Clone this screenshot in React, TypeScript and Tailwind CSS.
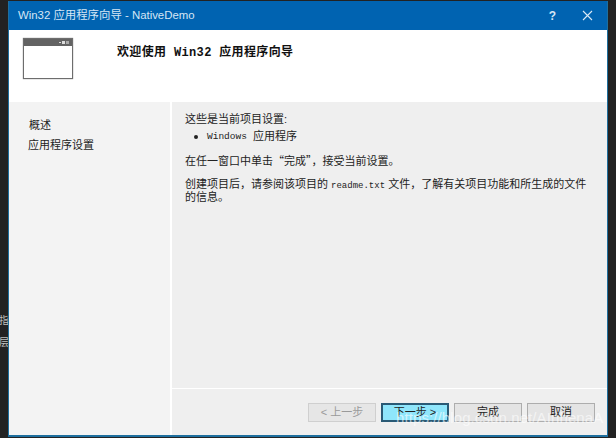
const cjk = "font-['Liberation_Sans','Noto_Sans_CJK_SC',sans-serif]";
const mono = "font-['Liberation_Mono','Noto_Sans_CJK_SC',monospace]";
const fullWidth = "font-['Noto_Sans_CJK_SC',sans-serif]";

function WizardButton({
  label,
  variant = "normal",
}: {
  label: string;
  variant?: "normal" | "primary" | "disabled";
}) {
  const styles = {
    normal: "border-[#adadad] bg-[#e4e4e4] text-[#222]",
    primary: "border-2 border-[#2a5a75] bg-[#8fe6fb] text-[#222]",
    disabled: "border-[#cfcfcf] bg-[#e6e6e6] text-[#9a9a9a]",
  };
  return (
    <div
      className={`flex h-[19px] w-[68px] items-center justify-center border text-[11px] ${styles[variant]}`}
    >
      {label}
    </div>
  );
}

export default function App() {
  return (
    <div className={`relative flex h-[438px] w-[616px] overflow-hidden bg-[#222222] ${cjk}`}>
      <div className="flex w-[8px] shrink-0 flex-col items-center pt-[310px] text-[10px] leading-[22px] text-[#c0c0c0]">
        <span>指</span>
        <span>层</span>
      </div>

      <div className="mt-px flex h-[436px] w-[600px] flex-col border-x border-b-2 border-[#1e6f9e] bg-white">
        <div className="flex h-[29px] shrink-0 items-center justify-between bg-[#0063b1] pl-[9px] pr-[14px] text-[11.4px] text-[#d5e6f5]">
          <span>Win32 应用程序向导 - NativeDemo</span>
          <div className="flex items-center gap-[26px]">
            <span className="text-[12px] font-bold">?</span>
            <svg width="11" height="11" viewBox="0 0 11 11" fill="none" stroke="#dbe9f5" strokeWidth="1.1">
              <path d="M1 1l9 9M10 1l-9 9" />
            </svg>
          </div>
        </div>

        <div className="flex h-[72px] shrink-0 bg-white">
          <div className="ml-[14px] mt-[8px] h-[41px] w-[50px] border border-[#6d6d6d] shadow-[0_0_1px_#777]">
            <div className="flex h-[7px] items-center justify-end gap-px bg-[#636363] pr-[3px]">
              <span className="h-px w-[2px] bg-[#ddd]" />
              <span className="h-[3px] w-[3px] bg-[#ddd]" />
              <span className="h-[3px] w-[3px] bg-[#aaa]" />
            </div>
          </div>
          <div className={`ml-[44px] mt-[15px] text-[12px] font-bold leading-[16px] tracking-[0.35px] text-[#111] ${mono}`}>
            欢迎使用 Win32 应用程序向导
          </div>
        </div>

        <div className="flex min-h-0 flex-1">
          <div className="w-[161px] shrink-0 bg-[#f3f3f3] pl-[19px] pt-[13px] text-[11px] leading-[20px] text-[#222]">
            <div className="pl-px">概述</div>
            <div>应用程序设置</div>
          </div>
          <div className="w-[2px] shrink-0 bg-white" />
          <div className="flex min-w-0 flex-1 flex-col bg-[#efefef]">
            <div className="h-[287px] shrink-0 border-b border-white pl-[13px] pr-[10px] pt-[10px] text-[11px] text-[#222]">
              <div className="leading-[15px]">这些是当前项目设置:</div>
              <div className="mt-[2px] flex items-center leading-[15px]">
                <span className="ml-[9px] mr-[9px] h-[4px] w-[4px] rounded-full bg-[#222]" />
                <span className={`text-[9.5px] ${mono}`}>Windows</span>
                <span className="ml-[6px]">应用程序</span>
              </div>
              <div className="mt-[9px] leading-[15px]">
                在任一窗口中单击<span className={fullWidth}>“完成”</span>，接受当前设置。
              </div>
              <div className="mt-[10px] w-[404px] text-[11px] leading-[11px]">
                创建项目后，请参阅该项目的 <span className={`text-[9px] ${mono}`}>readme.txt</span> 文件，了解有关项目功能和所生成的文件的信息。
              </div>
            </div>
            <div className="flex flex-1 items-start justify-end gap-[5px] pr-[12px] pt-[14px]">
              <WizardButton label="< 上一步" variant="disabled" />
              <WizardButton label="下一步 >" variant="primary" />
              <WizardButton label="完成" />
              <WizardButton label="取消" />
            </div>
          </div>
        </div>
      </div>

      <div className="absolute left-[396px] top-[409px] text-[15px] leading-[18px] tracking-[0.1px] text-white/60">
        https://blog.csdn.net/AInhenaA
      </div>
    </div>
  );
}
